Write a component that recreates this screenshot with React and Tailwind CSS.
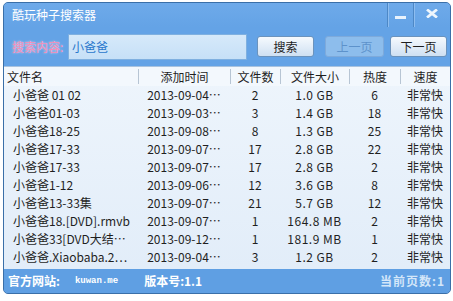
import React from 'react';

const rows = [
  ['小爸爸 01 02', '2013-09-04…', '2', '1.0 GB', '6'],
  ['小爸爸01-03', '2013-09-03…', '3', '1.4 GB', '18'],
  ['小爸爸18-25', '2013-09-08…', '8', '1.3 GB', '25'],
  ['小爸爸17-33', '2013-09-07…', '17', '2.8 GB', '22'],
  ['小爸爸17-33', '2013-09-07…', '17', '2.8 GB', '2'],
  ['小爸爸1-12', '2013-09-06…', '12', '3.6 GB', '8'],
  ['小爸爸13-33集', '2013-09-07…', '21', '5.7 GB', '12'],
  ['小爸爸18.[DVD].rmvb', '2013-09-07…', '1', '164.8 MB', '2'],
  ['小爸爸33[DVD大结…', '2013-09-12…', '1', '181.9 MB', '1'],
  ['小爸爸.Xiaobaba.2…', '2013-09-04…', '3', '1.2 GB', '2']
];

const cols = 'grid grid-cols-[134px_92px_50px_69px_51px_1fr]';

export default function App() {
  return (
    <div className="h-[301px] w-[453px] bg-white pt-[2px] pl-[3px] font-['Noto_Sans_CJK_SC',sans-serif] text-[12px]">
      <div className="flex h-[292px] w-[448px] flex-col overflow-hidden rounded-[5px] border border-[#3a6fa8] bg-[#64a3e6]">
        {/* title bar */}
        <div className="flex h-[24px] items-center bg-gradient-to-b from-[#6eaaea] to-[#64a3e6]">
          <span className="pl-[8px] leading-none text-white">酷玩种子搜索器</span>
          <div className="ml-auto flex h-full">
            <div className="flex w-[26px] items-center justify-center border-l border-[#4d88c6] shadow-[inset_1px_0_0_#8dbdf0]">
              <div className="mt-[4px] h-[3px] w-[11px] bg-[#e8f2fc]" />
            </div>
            <div className="flex w-[37px] items-center justify-center border-l border-[#4d88c6] shadow-[inset_1px_0_0_#8dbdf0]">
              <svg width="12" height="9" viewBox="0 0 12 9" className="-mt-[3px]">
                <path d="M1 0.5 L11 8.5 M11 0.5 L1 8.5" stroke="#eef6fd" strokeWidth="2.8" />
              </svg>
            </div>
          </div>
        </div>

        {/* search row */}
        <div className="flex h-[39px] items-center pl-[8px]">
          <span className="w-[56px] leading-none text-[#f38cb9] [text-shadow:0_0_2px_#fde3ee]">搜索内容:</span>
          <div className="flex h-[26px] w-[179px] items-center border border-[#7fb0e0] bg-gradient-to-b from-[#d6e9fa] to-[#c6e0f7] pl-[3px] text-[#2a78cc]">
            小爸爸
          </div>
          <button className="ml-[10px] h-[21px] w-[57px] rounded-[3px] border border-[#6b93bd] bg-gradient-to-b from-[#f6fafe] to-[#cfe0f2] leading-none text-[#1e1e1e]">
            搜索
          </button>
          <button className="ml-[11px] h-[21px] w-[59px] rounded-[3px] border border-[#7eaadb] bg-[#8dbdec] leading-none text-[#5d92cb]">
            上一页
          </button>
          <button className="ml-[6px] h-[21px] w-[57px] rounded-[3px] border border-[#6b93bd] bg-gradient-to-b from-[#f6fafe] to-[#cfe0f2] leading-none text-[#1e1e1e]">
            下一页
          </button>
        </div>

        {/* table */}
        <div className="flex flex-1 flex-col bg-gradient-to-b from-[#eef5fc] to-[#e2edf9] text-[#1f1f1f]">
          <div className={`${cols} h-[20px] items-center border-t border-[#a9c3df] bg-[#f3f8fd]`}>
            <div className="pl-[3px] leading-none">文件名</div>
            {['添加时间', '文件数', '文件大小', '热度', '速度'].map((h) => (
              <div key={h} className="flex h-[15px] items-center justify-center border-l border-[#b7c5d4] leading-none">
                {h}
              </div>
            ))}
          </div>
          {rows.map((r, i) => (
            <div key={i} className={`${cols} h-[18px] leading-[18px]`}>
              <div className="truncate pl-[9px]">{r[0]}</div>
              <div className="text-center">{r[1]}</div>
              <div className="text-center">{r[2]}</div>
              <div className="text-center tracking-[0.5px] whitespace-pre">{r[3]}</div>
              <div className="text-center">{r[4]}</div>
              <div className="text-center">非常快</div>
            </div>
          ))}
        </div>

        {/* footer */}
        <div className="flex h-[24px] items-center bg-[#5f9fe3] pl-[4px] pr-[5px] font-bold leading-none text-white">
          <span>官方网站:</span>
          <span className="ml-[15px] font-['Liberation_Mono',monospace] text-[9px]">kuwan.me</span>
          <span className="ml-[26px]">版本号:1.1</span>
          <span className="ml-auto tracking-[1px] text-[#d3e6f9]">当前页数:1</span>
        </div>
      </div>
    </div>
  );
}
